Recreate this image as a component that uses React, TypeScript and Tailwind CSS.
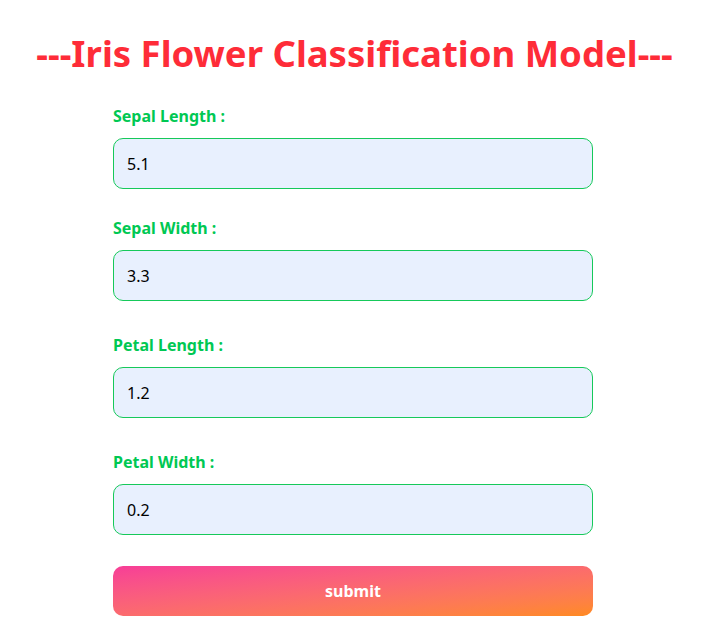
import { useState } from "react";

const fields = [
  { name: "sepal_length", label: "Sepal Length :", value: "5.1", gap: "mb-[27px]" },
  { name: "sepal_width", label: "Sepal Width :", value: "3.3", gap: "mb-[32px]" },
  { name: "petal_length", label: "Petal Length :", value: "1.2", gap: "mb-[32px]" },
  { name: "petal_width", label: "Petal Width :", value: "0.2", gap: "mb-[31px]" },
];

export default function App() {
  const [values, setValues] = useState<Record<string, string>>(
    Object.fromEntries(fields.map((f) => [f.name, f.value]))
  );

  return (
    <div className="min-h-screen bg-white font-['Noto_Sans','Open_Sans',sans-serif]">
      <h1 className="pt-[29px] text-center text-[36.5px] leading-[48px] font-bold text-[#fe2c38]">
        ---Iris Flower Classification Model---
      </h1>
      <form
        onSubmit={(e) => e.preventDefault()}
        className="ml-[113px] mt-[27px] flex w-[480px] flex-col"
      >
        {fields.map((f) => (
          <div key={f.name} className={`flex flex-col ${f.gap}`}>
            <label className="text-[16px] leading-6 font-bold text-[#00c853]">{f.label}</label>
            <input
              name={f.name}
              value={values[f.name]}
              onChange={(e) => setValues({ ...values, [f.name]: e.target.value })}
              className="mt-[10px] h-[51px] rounded-[10px] border border-[#16c95a] bg-[#e8f0fe] px-[13px] text-[16px] text-black outline-none"
            />
          </div>
        ))}
        <button
          type="submit"
          className="h-[50px] rounded-[10px] bg-gradient-to-br from-[#f73d97] to-[#ff8a1e] text-[16px] font-bold text-white"
        >
          submit
        </button>
      </form>
    </div>
  );
}
